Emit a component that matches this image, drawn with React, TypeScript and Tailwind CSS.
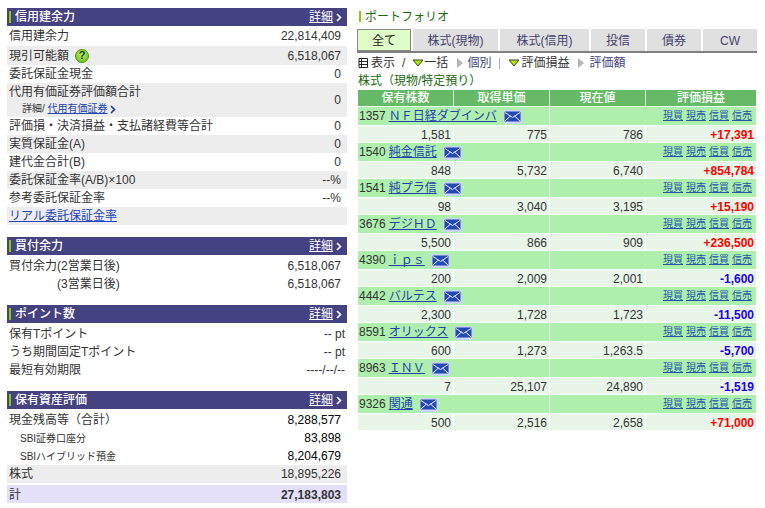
import { Fragment, type ReactNode } from "react";

const FONT = "font-['Liberation_Sans','Noto_Sans_CJK_JP',sans-serif]";

function Chevron({ className }: { className: string }) {
  return (
    <svg viewBox="0 0 6 9" className={`inline-block h-[9px] w-[6px] ${className}`} fill="none" stroke="currentColor" strokeWidth="1.6">
      <path d="M1 1l3.500 3.500L1 8" />
    </svg>
  );
}

function Mail() {
  return (
    <svg viewBox="0 0 19 14" className="h-[14px] w-[19px] shrink-0">
      <rect x="0" y="0" width="19" height="14" rx="2.500" fill="#c9d6f2" />
      <rect x="1.500" y="1.500" width="16" height="10" rx="1" fill="#2449b4" />
      <path d="M2 2.500l7.500 5 7.500-5M2 11l5.500-5M17 11l-5.500-5" fill="none" stroke="#eef3ff" strokeWidth="1" />
    </svg>
  );
}

function Help() {
  return (
    <span className="ml-[6px] grid h-[14px] w-[14px] place-items-center rounded-full border border-[#4a9a10] bg-[radial-gradient(circle_at_50%_35%,#c6f36a,#55b80c)] text-[11px] leading-none font-bold text-[#10400c]">
      ?
    </span>
  );
}

function Section({ title }: { title: string }) {
  return (
    <div className="flex h-[18px] items-center bg-[#454282] pr-[5px] pl-[2px] text-white">
      <span className="h-[12px] w-[2px] bg-[#88cc00]" />
      <span className="ml-1 flex-1 font-medium">{title}</span>
      <span className="underline">詳細</span>
      <Chevron className="ml-[3px] text-white" />
    </div>
  );
}

function Row({ label, value, gray, className = "", h = "h-[18px]" }: { label: ReactNode; value?: ReactNode; gray?: boolean; className?: string; h?: string }) {
  return (
    <div className={`flex items-center justify-between pr-[6px] pl-[2px] text-[#333] ${h} ${gray ? "bg-[#ededed]" : ""} ${className}`}>
      <div>{label}</div>
      <div>{value}</div>
    </div>
  );
}

function LeftColumn() {
  return (
    <div className="ml-[7px] w-[340px] pt-2">
      <Section title="信用建余力" />
      <Row h="h-[20px]" label="信用建余力" value="22,814,409" />
      <Row h="h-[19px]" gray label={<span className="flex items-center">現引可能額<Help /></span>} value="6,518,067" />
      <Row label="委託保証金現金" value="0" />
      <Row
        h="h-[34px]"
        gray
        label={
          <div>
            <div className="leading-[16px]">代用有価証券評価額合計</div>
            <div className="mt-[2px] ml-[13px] flex items-center text-[10px] leading-[14px]">
              詳細/&nbsp;<span className="text-[#2244aa] underline">代用有価証券</span>
              <Chevron className="ml-[2px] text-[#1c3a9c]" />
            </div>
          </div>
        }
        value="0"
      />
      <Row label="評価損・決済損益・支払諸経費等合計" value="0" />
      <Row gray label="実質保証金(A)" value="0" />
      <Row label="建代金合計(B)" value="0" />
      <Row gray label="委託保証金率(A/B)×100" value="--%" />
      <Row label="参考委託保証金率" value="--%" />
      <Row gray label={<span className="text-[#2244bb] underline">リアル委託保証金率</span>} />

      <div className="mt-3">
        <Section title="買付余力" />
        <div className="pt-[2px]">
          <Row label="買付余力(2営業日後)" value="6,518,067" />
          <Row label={<span className="pl-[48px]">(3営業日後)</span>} value="6,518,067" />
        </div>
      </div>

      <div className="mt-3">
        <Section title="ポイント数" />
        <div className="pt-[2px]">
          <Row className="!pr-[2px]" label="保有Tポイント" value="-- pt" />
          <Row className="!pr-[2px]" label="うち期間固定Tポイント" value="-- pt" />
          <Row className="!pr-[2px]" label="最短有効期限" value="----/--/--" />
        </div>
      </div>

      <div className="mt-3">
        <Section title="保有資産評価" />
        <div className="pt-[2px]">
          <Row label="現金残高等（合計）" value={<span className="text-black">8,288,577</span>} />
          <Row label={<span className="pl-[11px] text-[10px]">SBI証券口座分</span>} value={<span className="text-black">83,898</span>} />
          <Row label={<span className="pl-[11px] text-[10px]">SBIハイブリッド預金</span>} value={<span className="text-black">8,204,679</span>} />
        </div>
        <Row gray label="株式" value="18,895,226" />
        <Row className="mt-[2px] pt-px !bg-[#e4e0fa]" label="計" value={<b>27,183,803</b>} />
      </div>
    </div>
  );
}

const tabs = [
  { label: "全て", w: "w-[54px]", active: true },
  { label: "株式(現物)", w: "w-[85px]" },
  { label: "株式(信用)", w: "w-[89px]" },
  { label: "投信", w: "w-[54px]" },
  { label: "債券", w: "w-[54px]" },
  { label: "CW", w: "w-[54px]" },
];

const holdings = [
  { code: "1357", name: "ＮＦ日経ダブインバ", qty: "1,581", cost: "775", now: "786", pl: "+17,391" },
  { code: "1540", name: "純金信託", qty: "848", cost: "5,732", now: "6,740", pl: "+854,784" },
  { code: "1541", name: "純プラ信", qty: "98", cost: "3,040", now: "3,195", pl: "+15,190" },
  { code: "3676", name: "デジＨＤ", qty: "5,500", cost: "866", now: "909", pl: "+236,500" },
  { code: "4390", name: "ｉｐｓ", qty: "200", cost: "2,009", now: "2,001", pl: "-1,600" },
  { code: "4442", name: "バルテス", qty: "2,300", cost: "1,728", now: "1,723", pl: "-11,500" },
  { code: "8591", name: "オリックス", qty: "600", cost: "1,273", now: "1,263.5", pl: "-5,700" },
  { code: "8963", name: "ＩＮＶ", qty: "7", cost: "25,107", now: "24,890", pl: "-1,519" },
  { code: "9326", name: "関通", qty: "500", cost: "2,516", now: "2,658", pl: "+71,000" },
];

function DownMark() {
  return (
    <svg viewBox="0 0 12 8" className="h-[8px] w-[12px]">
      <path d="M1 1h10L6 7z" fill="#b6e600" stroke="#33403a" strokeWidth="1" />
    </svg>
  );
}

function RightMark() {
  return (
    <svg viewBox="0 0 6 10" className="h-[10px] w-[6px]">
      <path d="M0 0l6 5-6 5z" fill="#b4b4b4" />
    </svg>
  );
}

function Portfolio() {
  return (
    <div className="ml-[10px] w-[400px] pt-2">
      <div className="mb-1 flex h-[17px] items-center pl-[2px] text-[#1c6a10]">
        <span className="h-[11px] w-[2px] bg-[#88cc00]" />
        <span className="ml-1">ポートフォリオ</span>
      </div>
      <div className="flex gap-[2px]">
        {tabs.map((t) => (
          <div
            key={t.label}
            className={`grid h-[22px] place-items-center pt-px ${t.w} ${t.active ? "border border-[#888] bg-[#e0fdc8] text-[#222]" : "bg-[#e0e0e0] text-[#44446e]"}`}
          >
            {t.label}
          </div>
        ))}
      </div>
      <div className="h-[2px] bg-[#808080]" />
      <div className="flex h-[19px] items-center pt-px pl-[1px] text-[#333]">
        <svg viewBox="0 0 11 10" className="h-[10px] w-[11px]" fill="none" stroke="#222" strokeWidth="1">
          <path d="M1 .5h8.500v9H1zM1 3.500h8.500M1 6.500h8.500M3.500 .5v9" />
        </svg>
        <span className="ml-[2px]">表示</span>
        <span className="ml-[7px]">/</span>
        <span className="ml-[7px]"><DownMark /></span>
        <span>一括</span>
        <span className="ml-[9px]"><RightMark /></span>
        <span className="ml-[4px] text-[#44447e]">個別</span>
        <span className="mx-[8px] h-[11px] w-px bg-[#aaa]" />
        <DownMark />
        <span className="ml-[1px]">評価損益</span>
        <span className="ml-[9px]"><RightMark /></span>
        <span className="ml-[5px] text-[#44447e]">評価額</span>
      </div>
      <div className="h-[18px] pl-[1px] text-[#1c6a10]">株式（現物/特定預り）</div>
      <div className="ml-[1px] grid w-[398px] grid-cols-[95px_95px_95px_110px] gap-[1px]">
        {["保有株数", "取得単価", "現在値", "評価損益"].map((h) => (
          <div key={h} className="h-[16px] bg-[#66b966] text-center leading-[16px] font-medium text-white">
            {h}
          </div>
        ))}
        {holdings.map((s) => (
          <Fragment key={s.code}>
            <div className="col-span-2 flex h-[18px] items-center bg-[#aeefae] pl-[1px] text-[#333]">
              {s.code}
              <span className="ml-[3px] text-[#2244aa] underline">{s.name}</span>
              <span className="ml-[6px] translate-y-[1px]"><Mail /></span>
            </div>
            <div className="col-span-2 flex h-[18px] items-center justify-end gap-[3px] bg-[#aeefae] pr-[4px] text-[10px] text-[#2255aa] underline">
              <span>現買</span>
              <span>現売</span>
              <span>信買</span>
              <span>信売</span>
            </div>
            <div className="h-[16px] bg-[#e8f5e8] pr-[2px] text-right leading-[18px] text-[#333]">{s.qty}</div>
            <div className="h-[16px] bg-[#e8f5e8] pr-[2px] text-right leading-[18px] text-[#333]">{s.cost}</div>
            <div className="h-[16px] bg-[#e8f5e8] pr-[2px] text-right leading-[18px] text-[#333]">{s.now}</div>
            <div className={`h-[16px] bg-[#e8f5e8] pr-[2px] text-right leading-[18px] font-bold ${s.pl.startsWith("+") ? "text-[#ff0000]" : "text-[#2200ee]"}`}>{s.pl}</div>
          </Fragment>
        ))}
      </div>
    </div>
  );
}

export default function App() {
  return (
    <div className={`flex h-[508px] w-[765px] overflow-hidden bg-white text-[12px] leading-[18px] ${FONT}`}>
      <LeftColumn />
      <Portfolio />
    </div>
  );
}
